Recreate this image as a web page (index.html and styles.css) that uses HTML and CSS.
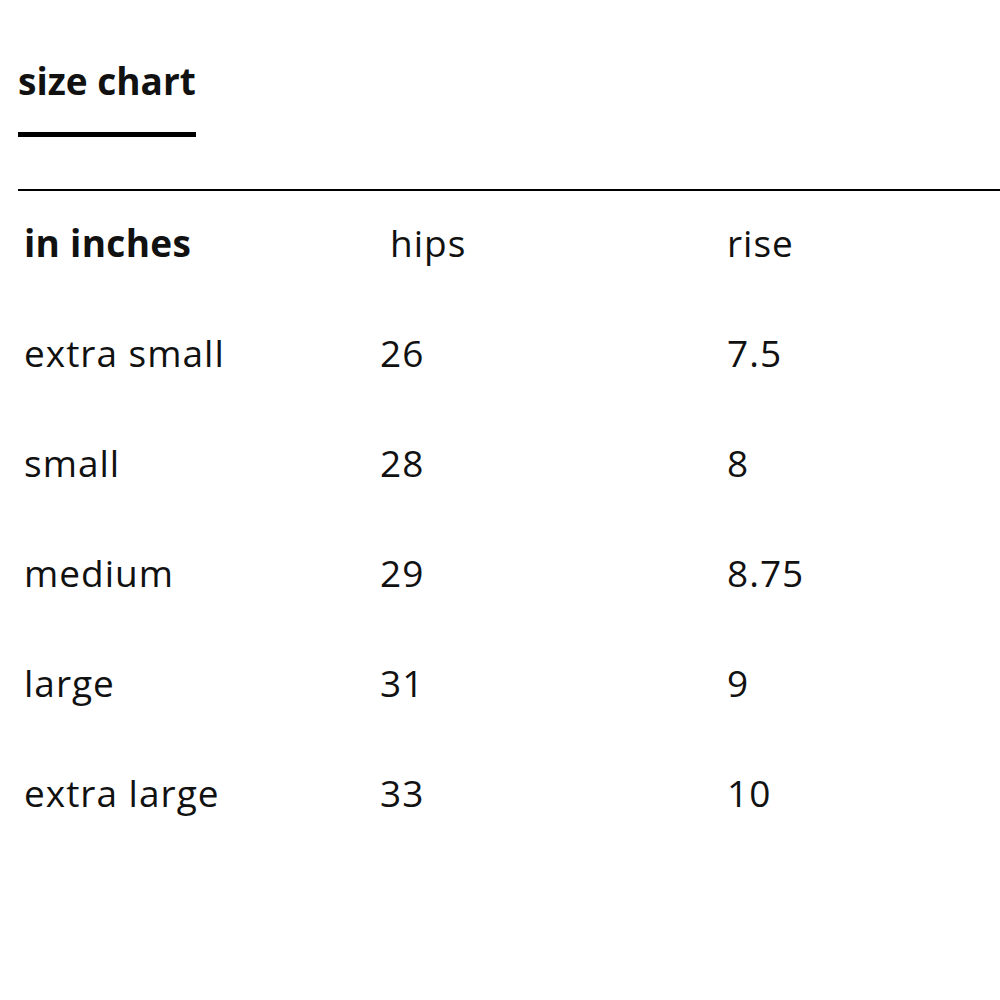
FILE: index.html
```html
<!DOCTYPE html>
<html lang="en">
<head>
<meta charset="utf-8">
<title>size chart</title>
<link rel="stylesheet" href="styles.css">
</head>
<body>
<main class="page">
  <header class="head">
    <h2 class="title">size chart</h2>
  </header>
  <hr class="rule">
  <div class="chart">
    <div class="cell cell-head">in inches</div>
    <div class="cell cell-col cell-hips">hips</div>
    <div class="cell cell-col">rise</div>

    <div class="cell">extra small</div>
    <div class="cell">26</div>
    <div class="cell">7.5</div>

    <div class="cell">small</div>
    <div class="cell">28</div>
    <div class="cell">8</div>

    <div class="cell">medium</div>
    <div class="cell">29</div>
    <div class="cell">8.75</div>

    <div class="cell">large</div>
    <div class="cell">31</div>
    <div class="cell">9</div>

    <div class="cell">extra large</div>
    <div class="cell">33</div>
    <div class="cell">10</div>
  </div>
</main>
</body>
</html>
```
FILE: styles.css
```css
html, body {
  margin: 0;
  padding: 0;
  background: #fff;
  overflow: hidden;
}
body {
  font-family: "Open Sans", "Liberation Sans", sans-serif;
  color: #111;
}
.page {
  padding-left: 18px;
  padding-top: 56px;
}
.head {
  display: flex;
}
.title {
  margin: 0;
  font-size: 37px;
  font-weight: 700;
  line-height: 50px;
  padding-bottom: 26px;
  border-bottom: 5px solid #000;
}
.rule {
  margin: 52px 0 0 0;
  border: 0;
  border-top: 2px solid #000;
  height: 0;
}
.chart {
  display: grid;
  grid-template-columns: 356px 347px 1fr;
  grid-auto-rows: 110px;
  margin-left: 6px;
  margin-top: -3px;
}
.cell {
  font-size: 37px;
  letter-spacing: 1px;
  line-height: 110px;
  white-space: nowrap;
}
.cell-head {
  font-weight: 700;
  letter-spacing: 0.3px;
}
.cell-hips {
  padding-left: 10px;
}
```
